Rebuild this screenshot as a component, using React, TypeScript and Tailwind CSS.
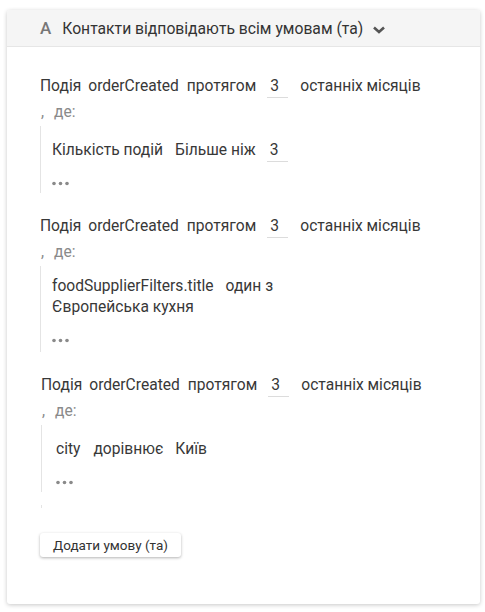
import React from 'react';

const font = { fontFamily: 'Roboto, "Noto Sans", sans-serif' };

const ValueInput = ({ value }: { value: string }) => (
    <input
        readOnly
        value={value}
        className="w-[21px] h-[28px] border-b border-[#dcdcdc] bg-transparent px-[3px] pt-[5px] text-[15.6px] text-[#383838] outline-none"
    />
);

const Dots = () => (
    <svg width="18" height="5" viewBox="0 0 18 5" className="block">
        <circle cx="2" cy="2.5" r="1.8" fill="#8a8a8a" />
        <circle cx="8.5" cy="2.5" r="1.8" fill="#8a8a8a" />
        <circle cx="15" cy="2.5" r="1.8" fill="#8a8a8a" />
    </svg>
);

const EventRow = () => (
    <>
        <div className="flex items-end h-[28px] text-[15.6px] leading-[24px] text-[#383838]">
            <span>Подія</span>
            <span className="ml-[7px]">orderCreated</span>
            <span className="ml-[8px]">протягом</span>
            <span className="ml-[11px] flex"><ValueInput value="3" /></span>
            <span className="ml-[12px]">останніх місяців</span>
        </div>
        <div className="flex items-end h-[24px] text-[15.6px] leading-[20px] text-[#8a8a8a]">
            <span className="ml-px">,</span>
            <span className="ml-[10px]">де:</span>
        </div>
    </>
);

const Condition = ({ children, className = '' }: { children: React.ReactNode; className?: string }) => (
    <div className={`mt-[4px] border-l border-[#e4e4e4] pl-[11px] ${className}`}>
        {children}
    </div>
);

const App = () => {
    return (
        <div className="min-h-screen bg-white pt-[10px] pl-[7px] pr-[5px] pb-[8px]" style={font}>
            <div className="h-[594px] bg-white rounded-[3px] shadow-[0_1px_4px_rgba(0,0,0,0.22)] overflow-hidden">
                {/* Header */}
                <div className="h-[37px] flex items-center bg-[#f5f5f5] border-b border-[#e6e6e6] pl-[33px] pt-[2px]">
                    <span className="text-[17px] font-medium text-[#777]">A</span>
                    <span className="ml-[11px] text-[15.7px] text-[#333]">Контакти відповідають всім умовам (та)</span>
                    <svg width="14" height="10" viewBox="0 0 14 10" className="ml-[9px] mt-[2px]">
                        <path d="M2 2.5l5 4.5 5-4.5" fill="none" stroke="#555" strokeWidth="2.6" />
                    </svg>
                </div>

                {/* Body */}
                <div className="px-[33px] pt-[23px]">
                    {/* Block 1 */}
                    <EventRow />
                    <Condition>
                        <div className="flex items-end h-[36px] text-[15.6px] leading-[24px] text-[#383838]">
                            <span>Кількість подій</span>
                            <span className="ml-[12px]">Більше ніж</span>
                            <span className="ml-[11px] flex"><ValueInput value="3" /></span>
                        </div>
                        <div className="mt-[11px] h-[20px] flex items-center"><Dots /></div>
                    </Condition>

                    {/* Block 2 */}
                    <div className="mt-[17px]">
                        <EventRow />
                        <Condition>
                            <div className="pt-[10px] text-[15.6px] leading-[21px] text-[#383838]">
                                <div className="flex">
                                    <span>foodSupplierFilters.title</span>
                                    <span className="ml-[12px]">один з</span>
                                </div>
                                <div>Європейська кухня</div>
                            </div>
                            <div className="mt-[12px] h-[20px] flex items-center"><Dots /></div>
                            <div className="h-[2px]" />
                        </Condition>
                    </div>

                    {/* Block 3 */}
                    <div className="mt-[17px] ml-px">
                        <EventRow />
                        <Condition className="pl-[14px]">
                            <div className="flex items-end h-[36px] text-[15.6px] leading-[24px] text-[#383838]">
                                <span>city</span>
                                <span className="ml-[13px]">дорівнює</span>
                                <span className="ml-[12px]">Київ</span>
                            </div>
                            <div className="mt-[11px] h-[20px] flex items-center"><Dots /></div>
                        </Condition>
                        <div className="mt-[13px] h-[3px] border-l border-[#e4e4e4]" />
                    </div>

                    <button className="mt-[25px] h-[24px] px-[13px] bg-white rounded-[3px] shadow-[0_1px_3px_rgba(0,0,0,0.3)] text-[13.5px] text-[#333]">
                        Додати умову (та)
                    </button>
                </div>
            </div>
        </div>
    );
};

export default App;
